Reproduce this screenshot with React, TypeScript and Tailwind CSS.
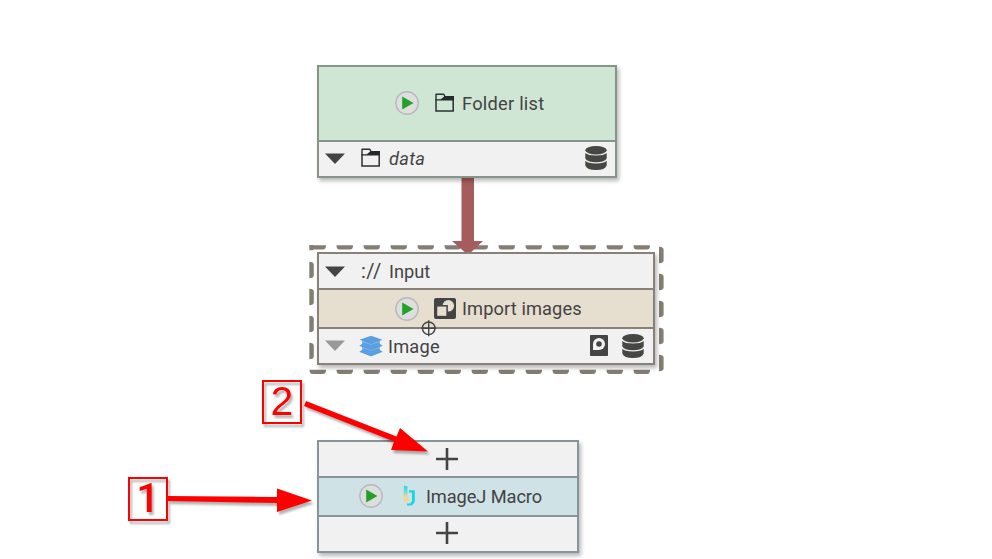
import type { ReactNode } from "react";

const FONT = "font-['Roboto','Liberation_Sans',sans-serif]";

function Play() {
  return (
    <svg className="block size-6 shrink-0" viewBox="0 0 24 24">
      <circle cx="12" cy="12" r="11.2" fill="#dedede" stroke="#b9b9b9" strokeWidth="1.4" />
      <path d="M7.2 5.5V18.5L18.5 12Z" fill="#22a12a" />
    </svg>
  );
}

function Folder() {
  return (
    <svg className="block h-5 w-5 shrink-0" viewBox="0 0 20 20">
      <path d="M1 7V1.3H8.8L10 3.6" fill="none" stroke="#2b3033" strokeWidth="1.4" strokeLinejoin="round" />
      <path d="M1 6.7V18H18.2V6.7" fill="none" stroke="#2b3033" strokeWidth="1.5" />
      <path d="M.4 7.4V6.2H5.8L9.8 3H19V7.4Z" fill="#24292c" />
    </svg>
  );
}

function Triangle({ color }: { color: string }) {
  return (
    <svg className="block h-[11px] w-5 shrink-0" viewBox="0 0 20 11">
      <path d="M0 0.5H20L10 11Z" fill={color} />
    </svg>
  );
}

function Database() {
  return (
    <svg className="block h-6 w-[22px] shrink-0" viewBox="0 0 22 24" fill="#464642">
      <ellipse cx="11" cy="4.3" rx="10.7" ry="4.2" />
      <path d="M.3 7Q3 9.5 11 9.5T21.7 7V12.5Q20 16.2 11 16.2T.3 12.5Z" />
      <path d="M.3 14.8Q3 17.5 11 17.5T21.7 14.8V19.5Q20 24 11 24T.3 19.5Z" />
    </svg>
  );
}

function Layers() {
  return (
    <svg className="block h-[22px] w-6 shrink-0" viewBox="0 0 24 22" fill="#5a9fe0">
      <path d="M.5 16.8L5 15.2H19L23.5 16.8L12 21.3Z" />
      <path d="M3 12H21V16H3Z" fill="#82b7ea" />
      <path d="M.5 10.8L5 9.2H19L23.5 10.8L12 15.3Z" />
      <path d="M3 6H21V10H3Z" fill="#82b7ea" />
      <path d="M5 7.5L12 10L19 7.5L23.5 10.8L12 15.3L.5 10.8Z" />
      <path d="M5 13.5L12 16L19 13.5L23.5 16.8L12 21.3L.5 16.8Z" />
      <path d="M.5 4.8L12 .8L23.5 4.8L12 9.2Z" />
    </svg>
  );
}

function ImportIcon() {
  return (
    <svg className="block h-[21px] w-[22px] shrink-0" viewBox="0 0 22 21">
      <rect width="22" height="21" rx="2" fill="#444" />
      <circle cx="14.3" cy="7.8" r="5.8" fill="#e6decf" />
      <rect x="2.5" y="7.8" width="10.6" height="10.8" fill="#e6decf" stroke="#444" strokeWidth="1.5" />
    </svg>
  );
}

function CacheIcon() {
  return (
    <svg className="block h-[21px] w-[18px] shrink-0" viewBox="0 0 18 21">
      <rect width="18" height="21" rx=".8" fill="#444" />
      <path d="M3 15V9A6 6 0 1 1 9 15Z" fill="#f2f2f2" />
      <circle cx="9" cy="9" r="2.8" fill="#444" />
    </svg>
  );
}

function MacroIcon() {
  return (
    <svg className="block h-[22px] w-[13px] shrink-0" viewBox="0 0 13 22">
      <defs>
        <linearGradient id="macro" x1="0" y1="0" x2="0" y2="1">
          <stop offset="0" stopColor="#16dce8" />
          <stop offset=".4" stopColor="#7edcd0" />
          <stop offset=".65" stopColor="#ecd79d" />
        </linearGradient>
      </defs>
      <path d="M1 .5L4.5 1.5V12L6.5 15.5L5 17.5H2L.3 14.5Z" fill="url(#macro)" />
      <path d="M6 5.2H11.8V17L8.8 20.6H4V18.4H7.2L9 16V7.4H6Z" fill="#12d8e4" />
    </svg>
  );
}

function Plus() {
  return (
    <svg className="block size-[22px]" viewBox="0 0 22 22">
      <path d="M0 11H22M11 0V22" stroke="#444" strokeWidth="2.6" />
    </svg>
  );
}

function Node({ className, children }: { className: string; children: ReactNode }) {
  return (
    <section className={`absolute flex flex-col border-2 bg-[#f1f1f1] shadow-[2px_3px_4px_rgba(0,0,0,0.28)] ${className}`}>
      {children}
    </section>
  );
}

function Label({ className = "", children }: { className?: string; children: ReactNode }) {
  return <span className={`whitespace-nowrap text-[18.25px] leading-6 text-[#434343] ${className}`}>{children}</span>;
}

const columns = Array.from({ length: 13 }, (_, i) => 309.5 + i * 27);
const rows = [0, 1, 2, 3];

function Selection() {
  return (
    <svg className="absolute left-0 top-0 h-[559px] w-[992px]" viewBox="0 0 992 559" fill="#837d73">
      {columns.map((x) => (
        <g key={x}>
          <path d={`M${x} 245.2h16.5q0 4.3-3 4.3h-10.5q-3 0-3-4.3Z`} />
          <path d={`M${x} 369.7h16.5q0 4.3-3 4.3h-10.5q-3 0-3-4.3Z`} />
        </g>
      ))}
      <path d="M309.3 245.2h4v5h-4Z" />
      {rows.map((r) => (
        <path key={r} d={`M309.3 ${261.7 + r * 27}q4.5 0 4.5 3v10.5q0 3-4.5 3Z`} />
      ))}
      {[...rows, 4].map((r) => (
        <path key={r} d={`M659 ${246.7 + r * 27}q4.6 0 4.6 3v10.5q0 3-4.6 3Z`} />
      ))}
      <path d="M461.5 178H474V241H483L468 255L452 241H461.5Z" fill="#a65c5c" />
    </svg>
  );
}

function Callout({ className, children }: { className: string; children: ReactNode }) {
  return (
    <div
      className={`absolute flex h-11 w-10 items-center justify-center border-2 border-[#ff0000] leading-none text-[#ff0000] drop-shadow-[2px_3px_1px_rgba(0,0,0,0.3)] ${className}`}
    >
      {children}
    </div>
  );
}

export default function App() {
  return (
    <main className={`relative h-[559px] w-[992px] overflow-hidden bg-white ${FONT}`}>
      <Selection />

      <Node className="left-[317px] top-[65px] h-[113px] w-[300px] border-[#87948a]">
        <div className="flex h-[75px] items-center border-b-2 border-[#87948a] bg-[#cfe6d5] pb-[2px] pl-[76px]">
          <Play />
          <span className="ml-4 flex"><Folder /></span>
          <Label className="ml-[7px] mt-[2px] tracking-[0.25px]">Folder list</Label>
        </div>
        <div className="flex flex-1 items-center pb-[2px] pl-[6px] pr-[8px]">
          <Triangle color="#444" />
          <span className="ml-4 flex"><Folder /></span>
          <Label className="ml-2 mt-[2px] tracking-[0.3px] italic">data</Label>
          <span className="ml-auto"><Database /></span>
        </div>
      </Node>

      <Node className="left-[317px] top-[252px] h-[113px] w-[338px] border-[#88817a]">
        <div className="flex h-[36px] items-center border-b-2 border-[#88817a] pl-[6px]">
          <Triangle color="#444" />
          <Label className="ml-4 w-[28px] text-[20px] tracking-[0.5px]">://</Label>
          <Label className="mt-px">Input</Label>
        </div>
        <div className="flex h-[39px] items-center border-b-2 border-[#88817a] bg-[#e6decf] pl-[76px]">
          <Play />
          <span className="ml-[15px] flex"><ImportIcon /></span>
          <Label className="ml-[6px] mt-px tracking-[0.1px]">Import images</Label>
        </div>
        <div className="flex flex-1 items-center pb-px pl-[6px] pr-[9px]">
          <Triangle color="#999" />
          <span className="ml-[14px] flex"><Layers /></span>
          <Label className="ml-[5px] mt-[2px] tracking-[0.2px]">Image</Label>
          <span className="ml-auto mr-[14px]"><CacheIcon /></span>
          <Database />
        </div>
      </Node>

      <svg className="absolute left-[420px] top-[319px] h-[18px] w-[18px]" viewBox="0 0 18 18" fill="none" stroke="#444" strokeWidth="1.4">
        <circle cx="8.7" cy="9.3" r="6.3" />
        <path d="M8.7 1.3V17.3M1.3 9.3H16.2" />
      </svg>

      <Node className="left-[317px] top-[440px] h-[113px] w-[262px] border-[#87959a]">
        <div className="flex h-[36px] items-center justify-center border-b-2 border-[#87959a] pb-px pr-[2px]">
          <Plus />
        </div>
        <div className="flex h-[39px] items-center border-b-2 border-[#87959a] bg-[#cfe2e6] pb-[2px] pl-[40px]">
          <Play />
          <span className="ml-[20px] flex"><MacroIcon /></span>
          <Label className="ml-[10px] mt-[2px] tracking-[-0.1px]">ImageJ Macro</Label>
        </div>
        <div className="flex flex-1 items-center justify-center pb-[2px] pr-[2px]">
          <Plus />
        </div>
      </Node>

      <Callout className="left-[262px] top-[380px] pb-px font-['Liberation_Sans',sans-serif] text-[41px]">2</Callout>
      <Callout className="left-[128px] top-[477px] pb-[2px] font-medium text-[41px]">1</Callout>
      <svg className="absolute left-0 top-0 h-[559px] w-[992px] drop-shadow-[2px_3px_1px_rgba(0,0,0,0.3)]" viewBox="0 0 992 559" fill="#ff0000">
        <path d="M306 401L396.5 436.5L400 428L428 451.5L391 450L394 441.5L304 406Z" />
        <path d="M168 496L277 497V488.5L312 500.5L277 512V503L168 501Z" />
      </svg>
    </main>
  );
}
